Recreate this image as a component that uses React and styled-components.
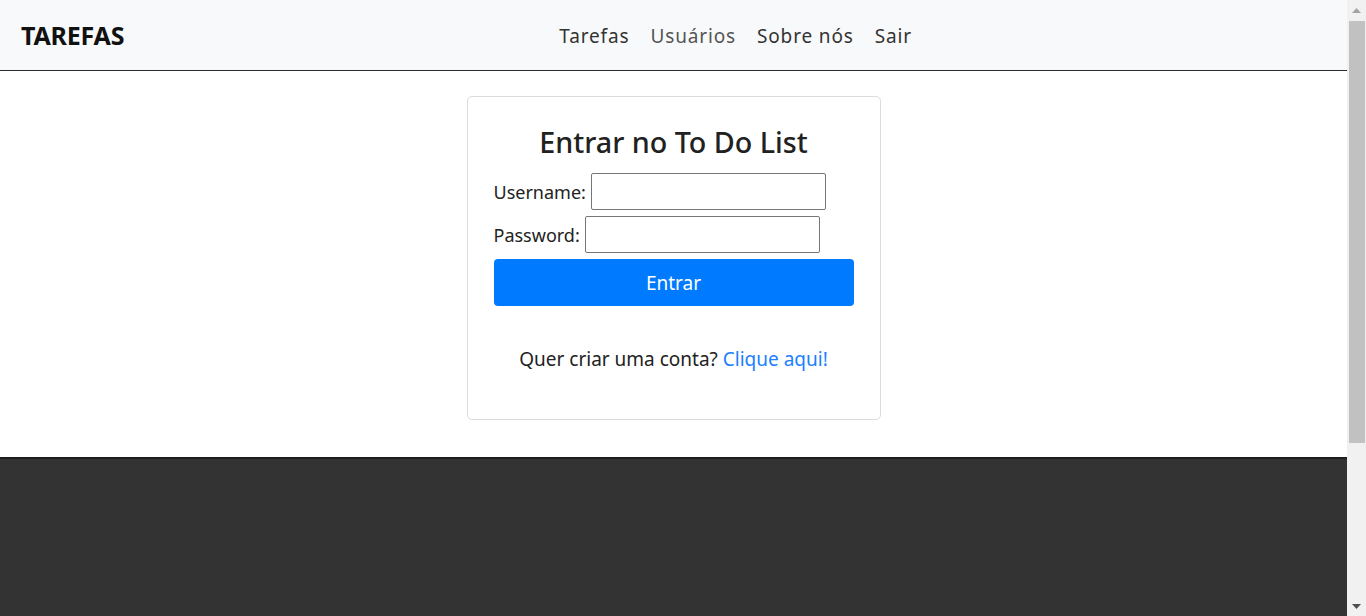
import React from 'react';
import styled, { createGlobalStyle } from 'styled-components';

const GlobalStyle = createGlobalStyle`
  body {
    margin: 0;
    font-family: "Noto Sans", "Open Sans", Arial, sans-serif;
    color: #212529;
    background: #fff;
  }
`;

// the browser window: page on the left, classic scrollbar on the right
const Window = styled.div`
  display: flex;
  height: 100vh;
  overflow: hidden;
`;

const Viewport = styled.div`
  flex: 1;
  min-width: 0;
  overflow: hidden;
`;

const ScrollBar = styled.div`
  width: 19px;
  display: flex;
  flex-direction: column;
  background: #f1f1f1;
`;

const ScrollButton = styled.div`
  height: 20px;
  display: flex;
  align-items: center;
  justify-content: center;
`;

const ScrollTrack = styled.div`
  flex: 1;
`;

const ScrollThumb = styled.div`
  height: 422px;
  margin: 1px 1px 0 2px;
  background: #c1c1c1;
`;

const Navbar = styled.nav`
  display: flex;
  align-items: center;
  height: 70px;
  padding-left: 21px;
  background: #f8f9fa;
  border-bottom: 1px solid #2b2b2b;
`;

const Brand = styled.a`
  font-size: 25px;
  font-weight: 700;
  color: #111;
  text-decoration: none;
  letter-spacing: -0.2px;
`;

const NavList = styled.ul`
  flex: 1;
  display: flex;
  justify-content: center;
  gap: 21px;
  margin: 2px 0 0;
  padding: 0;
  list-style: none;
`;

const NavLink = styled.a`
  font-size: 19px;
  letter-spacing: 0.85px;
  color: ${props => (props.$muted ? '#555' : '#333')};
  text-decoration: none;
`;

const Main = styled.main`
  display: flex;
  justify-content: center;
  padding: 25px 0 37px;
`;

const Card = styled.div`
  width: 360px;
  padding: 20px 26px 47px;
  border: 1px solid #dcdcdc;
  border-radius: 5px;
`;

const Title = styled.h3`
  margin: 0 0 6px;
  text-align: center;
  font-size: 28.7px;
  font-weight: 500;
  line-height: 50px;
  color: #212121;
`;

const Field = styled.div`
  display: flex;
  align-items: center;
  gap: 5px;
  margin-bottom: 6px;
`;

const Label = styled.label`
  font-size: 18px;
  color: #222;
`;

const Input = styled.input`
  width: 235px;
  height: 37px;
  box-sizing: border-box;
  border: 1px solid #767676;
  border-radius: 2px;
  padding: 2px 4px;
  font-size: 16px;
`;

const Button = styled.button`
  display: block;
  width: 100%;
  height: 47px;
  margin-top: 2px;
  border: none;
  border-radius: 4px;
  background: #007bff;
  color: #fff;
  font-family: inherit;
  font-size: 19px;
`;

const Signup = styled.p`
  margin: 40px 0 0;
  text-align: center;
  font-size: 19px;
  line-height: 26px;
  color: #222;
`;

const SignupLink = styled.a`
  color: #1a80ff;
  text-decoration: none;
`;

const Footer = styled.footer`
  height: 392px;
  background: #333;
  border-top: 2px solid #1f1f1f;
`;

const Arrow = ({ down }) => (
  <svg width="9" height="5" viewBox="0 0 9 5">
    <path d={down ? 'M0 0 L9 0 L4.5 5 Z' : 'M0 5 L9 5 L4.5 0 Z'} fill={down ? '#505050' : '#a3a3a3'} />
  </svg>
);

export default function App() {
  return (
    <>
      <GlobalStyle />
      <Window>
        <Viewport>
          <Navbar>
            <Brand href="#">TAREFAS</Brand>
            <NavList>
              <li><NavLink href="#">Tarefas</NavLink></li>
              <li><NavLink href="#" $muted>Usuários</NavLink></li>
              <li><NavLink href="#">Sobre nós</NavLink></li>
              <li><NavLink href="#">Sair</NavLink></li>
            </NavList>
          </Navbar>
          <Main>
            <Card>
              <Title>Entrar no To Do List</Title>
              <form onSubmit={e => e.preventDefault()}>
                <Field>
                  <Label htmlFor="username">Username:</Label>
                  <Input id="username" type="text" />
                </Field>
                <Field>
                  <Label htmlFor="password">Password:</Label>
                  <Input id="password" type="password" />
                </Field>
                <Button type="submit">Entrar</Button>
              </form>
              <Signup>
                Quer criar uma conta? <SignupLink href="#">Clique aqui!</SignupLink>
              </Signup>
            </Card>
          </Main>
          <Footer />
        </Viewport>
        <ScrollBar>
          <ScrollButton><Arrow /></ScrollButton>
          <ScrollTrack><ScrollThumb /></ScrollTrack>
          <ScrollButton><Arrow down /></ScrollButton>
        </ScrollBar>
      </Window>
    </>
  );
}
